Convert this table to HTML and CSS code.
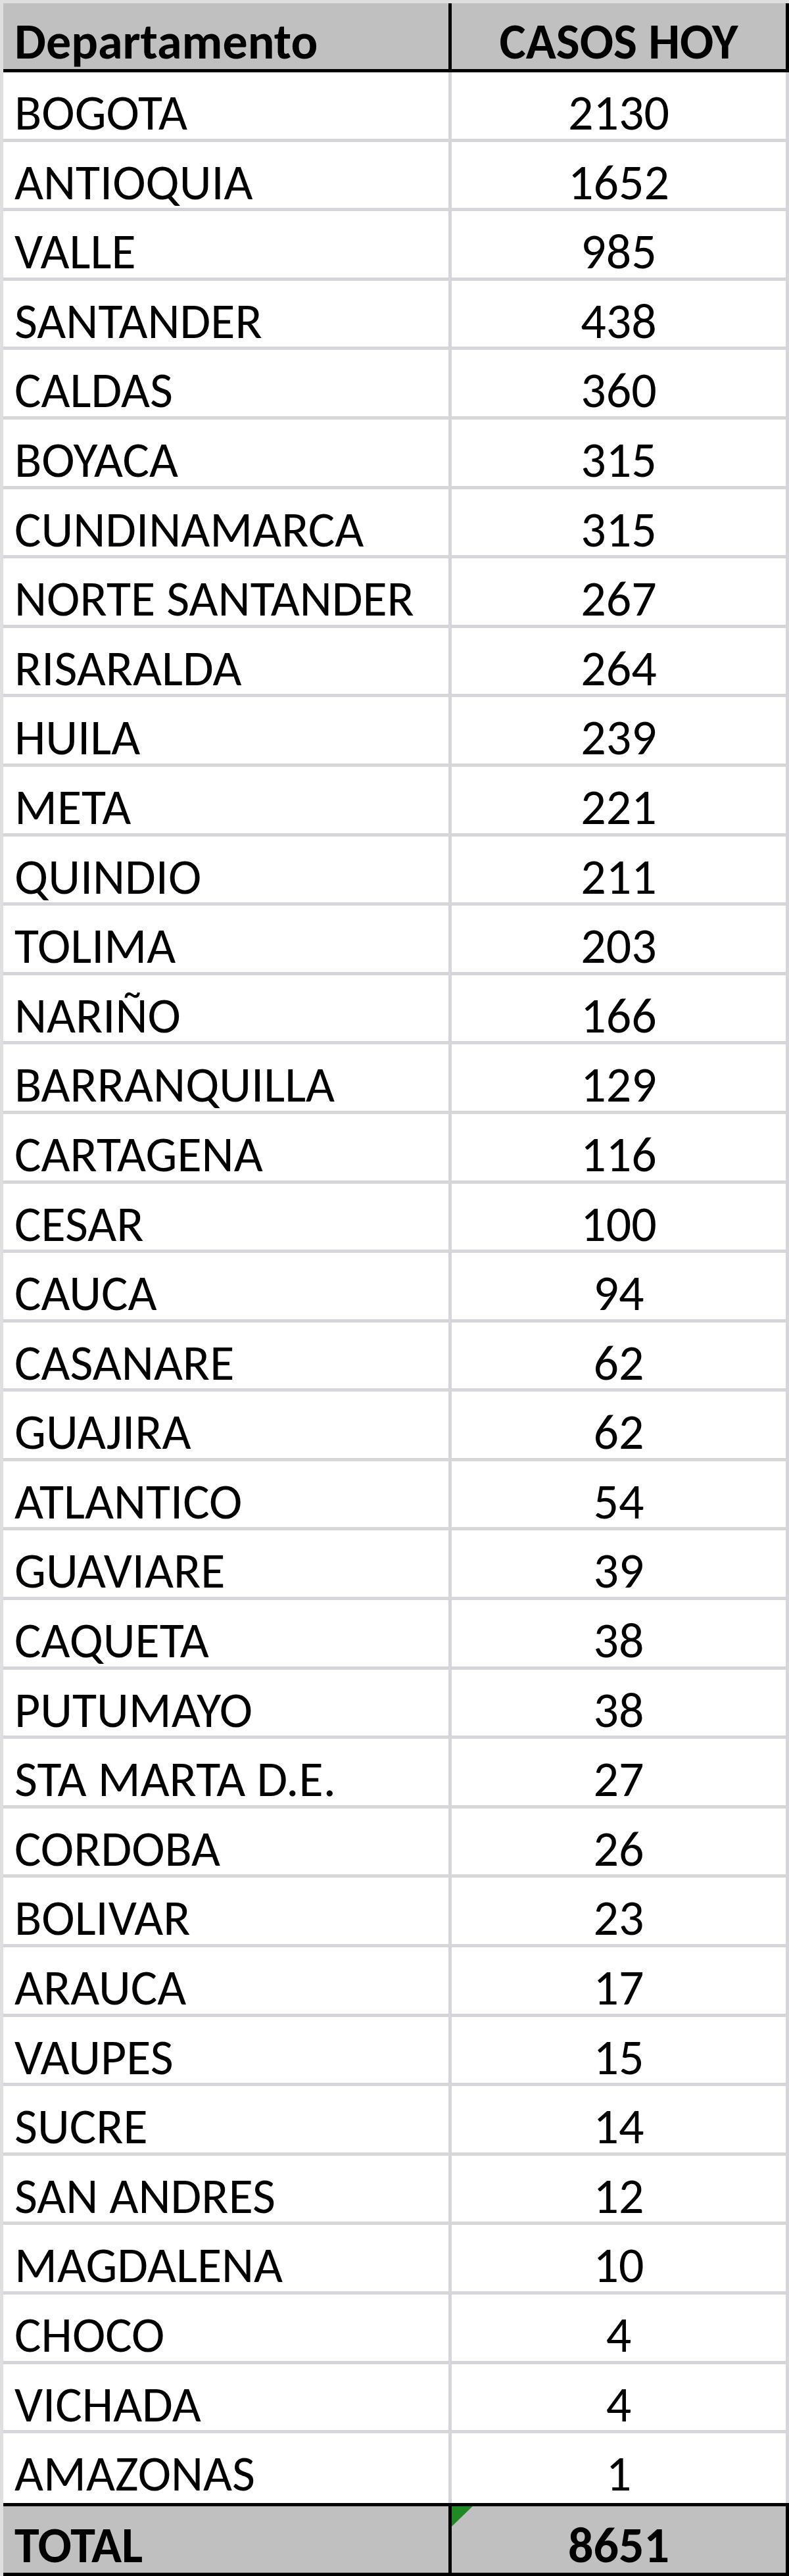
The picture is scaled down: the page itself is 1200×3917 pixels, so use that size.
FILE: index.html
```html
<!DOCTYPE html>
<html lang="es">
<head>
<meta charset="utf-8">
<title>Casos hoy por departamento</title>
<link rel="stylesheet" href="styles.css">
</head>
<body>
<div class="sheet">
  <div class="row head">
    <div class="cell name">Departamento</div>
    <div class="cell num">CASOS HOY</div>
  </div>
  <div class="row"><div class="cell name">BOGOTA</div><div class="cell num">2130</div></div>
  <div class="row"><div class="cell name">ANTIOQUIA</div><div class="cell num">1652</div></div>
  <div class="row"><div class="cell name">VALLE</div><div class="cell num">985</div></div>
  <div class="row"><div class="cell name">SANTANDER</div><div class="cell num">438</div></div>
  <div class="row"><div class="cell name">CALDAS</div><div class="cell num">360</div></div>
  <div class="row"><div class="cell name">BOYACA</div><div class="cell num">315</div></div>
  <div class="row"><div class="cell name">CUNDINAMARCA</div><div class="cell num">315</div></div>
  <div class="row"><div class="cell name">NORTE SANTANDER</div><div class="cell num">267</div></div>
  <div class="row"><div class="cell name">RISARALDA</div><div class="cell num">264</div></div>
  <div class="row"><div class="cell name">HUILA</div><div class="cell num">239</div></div>
  <div class="row"><div class="cell name">META</div><div class="cell num">221</div></div>
  <div class="row"><div class="cell name">QUINDIO</div><div class="cell num">211</div></div>
  <div class="row"><div class="cell name">TOLIMA</div><div class="cell num">203</div></div>
  <div class="row"><div class="cell name">NARIÑO</div><div class="cell num">166</div></div>
  <div class="row"><div class="cell name">BARRANQUILLA</div><div class="cell num">129</div></div>
  <div class="row"><div class="cell name">CARTAGENA</div><div class="cell num">116</div></div>
  <div class="row"><div class="cell name">CESAR</div><div class="cell num">100</div></div>
  <div class="row"><div class="cell name">CAUCA</div><div class="cell num">94</div></div>
  <div class="row"><div class="cell name">CASANARE</div><div class="cell num">62</div></div>
  <div class="row"><div class="cell name">GUAJIRA</div><div class="cell num">62</div></div>
  <div class="row"><div class="cell name">ATLANTICO</div><div class="cell num">54</div></div>
  <div class="row"><div class="cell name">GUAVIARE</div><div class="cell num">39</div></div>
  <div class="row"><div class="cell name">CAQUETA</div><div class="cell num">38</div></div>
  <div class="row"><div class="cell name">PUTUMAYO</div><div class="cell num">38</div></div>
  <div class="row"><div class="cell name">STA MARTA D.E.</div><div class="cell num">27</div></div>
  <div class="row"><div class="cell name">CORDOBA</div><div class="cell num">26</div></div>
  <div class="row"><div class="cell name">BOLIVAR</div><div class="cell num">23</div></div>
  <div class="row"><div class="cell name">ARAUCA</div><div class="cell num">17</div></div>
  <div class="row"><div class="cell name">VAUPES</div><div class="cell num">15</div></div>
  <div class="row"><div class="cell name">SUCRE</div><div class="cell num">14</div></div>
  <div class="row"><div class="cell name">SAN ANDRES</div><div class="cell num">12</div></div>
  <div class="row"><div class="cell name">MAGDALENA</div><div class="cell num">10</div></div>
  <div class="row"><div class="cell name">CHOCO</div><div class="cell num">4</div></div>
  <div class="row"><div class="cell name">VICHADA</div><div class="cell num">4</div></div>
  <div class="row last"><div class="cell name">AMAZONAS</div><div class="cell num">1</div></div>
  <div class="row total">
    <div class="cell name">TOTAL</div>
    <div class="cell num"><span class="flag"></span>8651</div>
  </div>
</div>
</body>
</html>
```
FILE: styles.css
```css
html, body {
  margin: 0;
  padding: 0;
}
body {
  background: #dedfe0;
  padding: 5px 0 0 5px;
  font-family: Carlito, "Liberation Sans Narrow", "DejaVu Sans Condensed", sans-serif;
  color: #000;
}
.sheet {
  width: 1195px;
  display: flex;
  flex-direction: column;
}
.row {
  display: flex;
  box-sizing: border-box;
  height: 105.6px;
  background: #fff;
  border-bottom: 5px solid #d5d6da;
}
.row.last {
  border-bottom: none;
}
.cell {
  box-sizing: border-box;
  font-size: 76px;
  line-height: 76px;
  padding-top: 23px;
  white-space: nowrap;
  border-right: 5px solid #d5d6da;
}
.name {
  width: 682px;
  padding-left: 17px;
}
.num {
  width: 513px;
  text-align: center;
  position: relative;
}
.head {
  height: 105px;
  background: #c0c0c0;
  border-bottom-color: #000;
}
.head .cell {
  font-weight: bold;
  padding-top: 20px;
  border-right-color: #000;
}
.total {
  height: 111px;
  background: #c0c0c0;
  border-top: 5px solid #000;
  border-bottom: 5px solid #000;
}
.total .cell {
  font-weight: bold;
  padding-top: 21px;
  border-right-color: #000;
}
.flag {
  position: absolute;
  left: 0;
  top: 0;
  width: 32px;
  height: 31px;
  background: #1f8a24;
  clip-path: polygon(0 0, 100% 0, 0 100%);
}
```
